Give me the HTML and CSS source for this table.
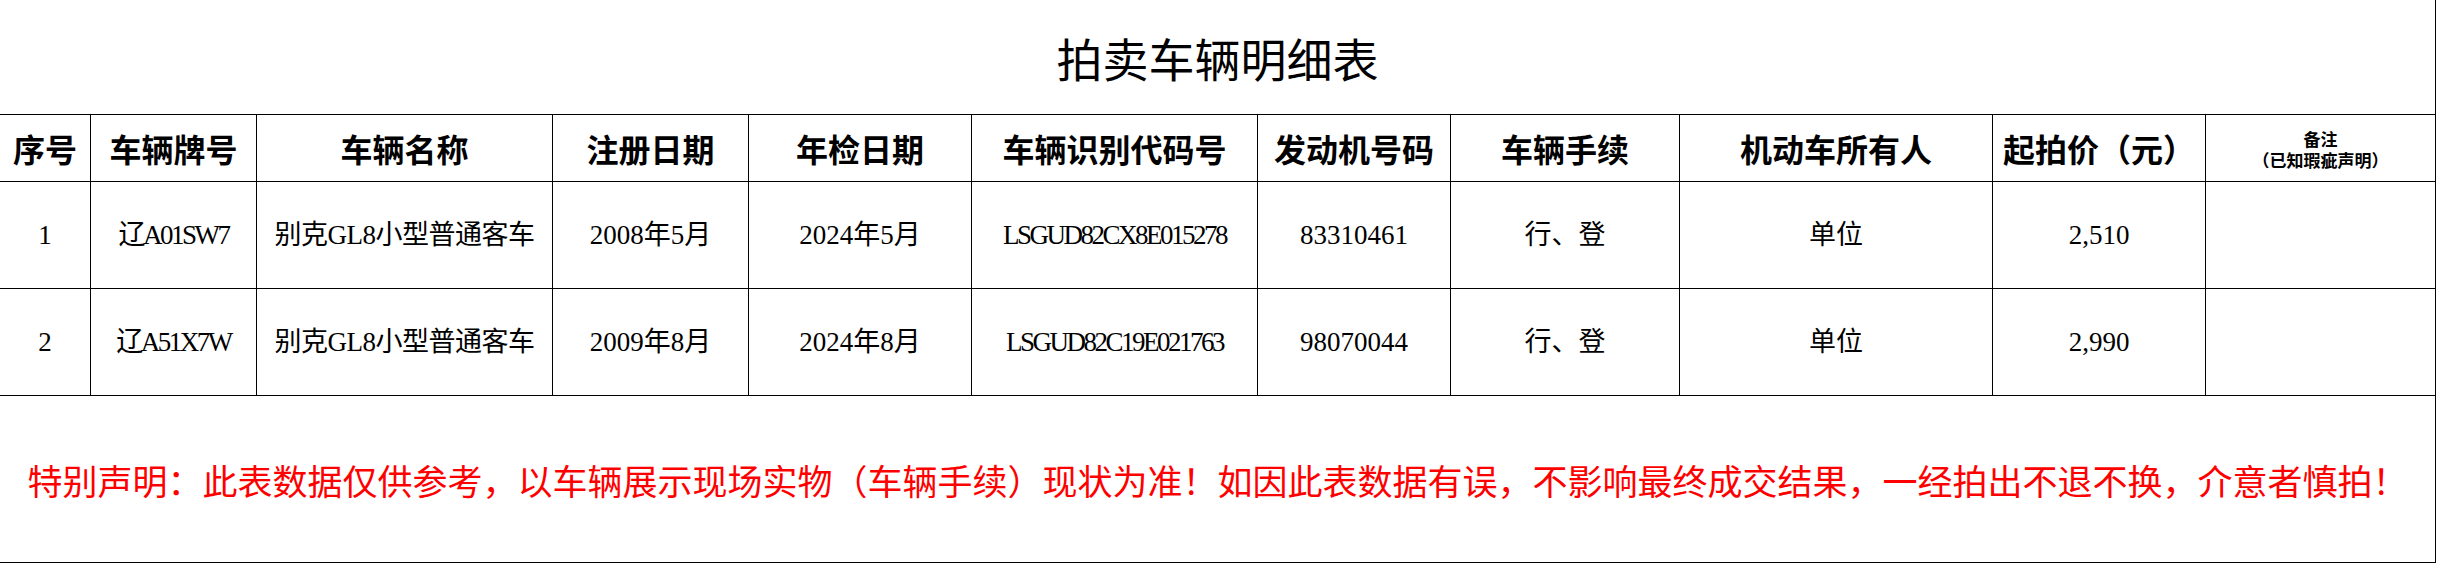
FILE: index.html
```html
<!DOCTYPE html>
<html lang="zh-CN">
<head>
<meta charset="utf-8">
<title>拍卖车辆明细表</title>
<link rel="stylesheet" href="styles.css">
</head>
<body>
<div class="sheet">
  <div class="title">拍卖车辆明细表</div>

  <div class="hd">序号</div>
  <div class="hd">车辆牌号</div>
  <div class="hd">车辆名称</div>
  <div class="hd">注册日期</div>
  <div class="hd">年检日期</div>
  <div class="hd">车辆识别代码号</div>
  <div class="hd">发动机号码</div>
  <div class="hd">车辆手续</div>
  <div class="hd">机动车所有人</div>
  <div class="hd">起拍价（元）</div>
  <div class="hd remark"><span>备注</span><span>（已知瑕疵声明）</span></div>

  <div class="cell">1</div>
  <div class="cell tight">辽A01SW7</div>
  <div class="cell name">别克GL8小型普通客车</div>
  <div class="cell">2008年5月</div>
  <div class="cell">2024年5月</div>
  <div class="cell tight">LSGUD82CX8E015278</div>
  <div class="cell">83310461</div>
  <div class="cell">行、登</div>
  <div class="cell">单位</div>
  <div class="cell">2,510</div>
  <div class="cell"></div>

  <div class="cell">2</div>
  <div class="cell tight">辽A51X7W</div>
  <div class="cell name">别克GL8小型普通客车</div>
  <div class="cell">2009年8月</div>
  <div class="cell">2024年8月</div>
  <div class="cell tight">LSGUD82C19E021763</div>
  <div class="cell">98070044</div>
  <div class="cell">行、登</div>
  <div class="cell">单位</div>
  <div class="cell">2,990</div>
  <div class="cell"></div>

  <div class="notice">特别声明：此表数据仅供参考，以车辆展示现场实物（车辆手续）现状为准！如因此表数据有误，不影响最终成交结果，一经拍出不退不换，介意者慎拍！</div>
</div>
</body>
</html>
```

FILE: styles.css
```css
html, body {
  margin: 0;
  padding: 0;
  background: #ffffff;
}

.sheet {
  display: grid;
  grid-template-columns: 91px 166px 296px 196px 223px 286px 193px 229px 313px 213px 230px;
  grid-template-rows: 115px 67px 107px 107px 167px;
  width: 2436px;
  font-family: "Noto Sans CJK SC", sans-serif;
  color: #000000;
}

.sheet > div {
  box-sizing: border-box;
  border-right: 1px solid #000000;
  border-bottom: 1px solid #000000;
  display: flex;
  align-items: center;
  justify-content: center;
  text-align: center;
  white-space: nowrap;
  overflow: hidden;
}

.title {
  grid-column: 1 / -1;
  font-size: 46px;
  line-height: 1;
  font-weight: 400;
}

.hd {
  font-size: 32px;
  font-weight: 700;
  line-height: 1;
}

.remark {
  flex-direction: column;
  font-size: 17px;
  line-height: 21px;
  padding-top: 2px;
}

.cell {
  font-family: "Liberation Serif", "Noto Sans CJK SC", serif;
  font-size: 27px;
  line-height: 1;
  font-weight: 400;
}

.tight {
  letter-spacing: -2.5px;
}

.name {
  letter-spacing: -0.5px;
}

.notice {
  grid-column: 1 / -1;
  color: #ff0000;
  font-size: 35px;
  line-height: 1;
  font-weight: 400;
}
```
